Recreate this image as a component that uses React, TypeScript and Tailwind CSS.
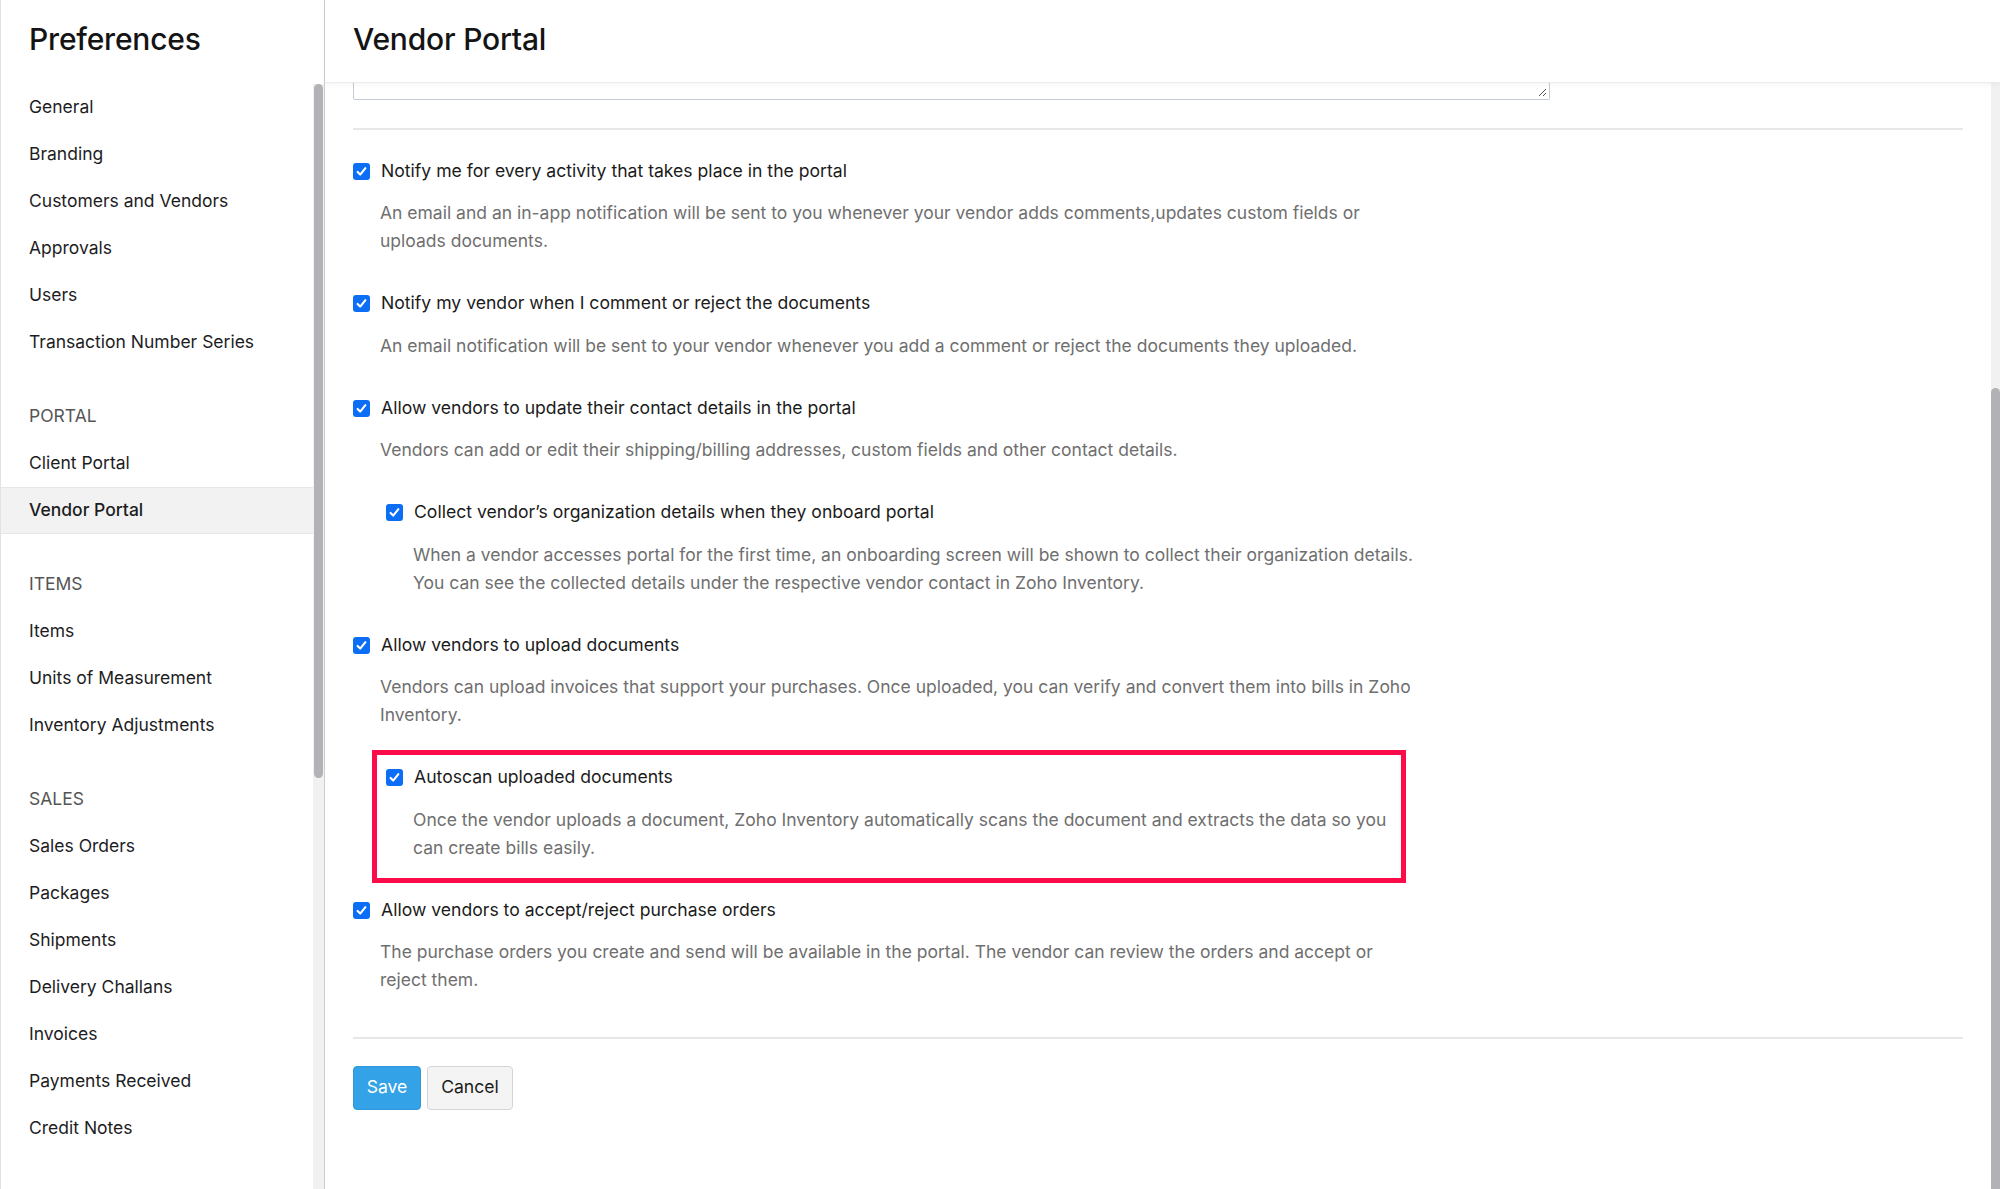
import React from 'react';

const groups = [
  { title: '', items: ['General', 'Branding', 'Customers and Vendors', 'Approvals', 'Users', 'Transaction Number Series'] },
  { title: 'PORTAL', items: ['Client Portal', 'Vendor Portal'] },
  { title: 'ITEMS', items: ['Items', 'Units of Measurement', 'Inventory Adjustments'] },
  {
    title: 'SALES',
    items: ['Sales Orders', 'Packages', 'Shipments', 'Delivery Challans', 'Invoices', 'Payments Received', 'Credit Notes'],
  },
];

const settings = [
  {
    label: 'Notify me for every activity that takes place in the portal',
    lines: [
      'An email and an in-app notification will be sent to you whenever your vendor adds comments,updates custom fields or',
      'uploads documents.',
    ],
  },
  {
    label: 'Notify my vendor when I comment or reject the documents',
    lines: ['An email notification will be sent to your vendor whenever you add a comment or reject the documents they uploaded.'],
  },
  {
    label: 'Allow vendors to update their contact details in the portal',
    lines: ['Vendors can add or edit their shipping/billing addresses, custom fields and other contact details.'],
  },
  {
    label: 'Collect vendor’s organization details when they onboard portal',
    sub: true,
    lines: [
      'When a vendor accesses portal for the first time, an onboarding screen will be shown to collect their organization details.',
      'You can see the collected details under the respective vendor contact in Zoho Inventory.',
    ],
  },
  {
    label: 'Allow vendors to upload documents',
    lines: [
      'Vendors can upload invoices that support your purchases. Once uploaded, you can verify and convert them into bills in Zoho',
      'Inventory.',
    ],
  },
  {
    label: 'Autoscan uploaded documents',
    sub: true,
    marked: true,
    lines: [
      'Once the vendor uploads a document, Zoho Inventory automatically scans the document and extracts the data so you',
      'can create bills easily.',
    ],
  },
  {
    label: 'Allow vendors to accept/reject purchase orders',
    lines: [
      'The purchase orders you create and send will be available in the portal. The vendor can review the orders and accept or',
      'reject them.',
    ],
  },
];

function Checkbox() {
  return (
    <span className="w-[17px] h-[17px] shrink-0 rounded-[3px] bg-[#0b6ef5] flex items-center justify-center">
      <svg width="13" height="13" viewBox="0 0 13 13" fill="none">
        <path d="M2.6 6.9 5.2 9.6 10.4 3.2" stroke="white" strokeWidth="2.1" strokeLinecap="round" strokeLinejoin="round" />
      </svg>
    </span>
  );
}

export default function App() {
  return (
    <div className="flex w-[2000px] h-[1189px] overflow-hidden bg-white text-[#1d1d1f] font-['Inter','Liberation_Sans',sans-serif]">
      {/* Sidebar */}
      <aside className="w-[325px] shrink-0 flex flex-col border-l border-l-[#e2e2e2] border-r border-r-[#cdcdcd]">
        <div className="h-[84px] shrink-0 flex items-center pl-[28px] pb-[5px]">
          <h1 className="text-[30px] font-medium tracking-[-0.2px] text-[#141414]">Preferences</h1>
        </div>
        <div className="flex flex-1 min-h-0">
          <nav className="flex-1">
            {groups.map((g) => (
              <div key={g.title || 'main'} className={g.title ? 'mt-[27px]' : ''}>
                {g.title && (
                  <div className="h-[47px] flex items-center pl-[28px] text-[17.5px] text-[#555]">{g.title}</div>
                )}
                {g.items.map((item) => (
                  <div
                    key={item}
                    className={
                      item === 'Vendor Portal'
                        ? 'h-[47px] flex items-center pl-[28px] text-[17.5px] font-medium bg-[#f2f2f2] border-y border-[#e7e7e7]'
                        : 'h-[47px] flex items-center pl-[28px] text-[17.5px]'
                    }
                  >
                    {item}
                  </div>
                ))}
              </div>
            ))}
          </nav>
          <div className="w-[11px] bg-[#f1f1f1] flex flex-col">
            <div className="h-[694px] mx-[1px] rounded-full bg-[#b2b2b7]" />
          </div>
        </div>
      </aside>

      {/* Main */}
      <main className="flex-1 flex flex-col min-w-0">
        <header className="h-[83px] shrink-0 flex items-center pl-[28px] pb-[3px] border-b border-[#ececec] shadow-[0_2px_4px_rgba(0,0,0,0.04)] relative z-10">
          <h2 className="text-[30px] font-medium tracking-[-0.2px] text-[#141414]">Vendor Portal</h2>
        </header>
        <div className="flex flex-1 min-h-0">
          <section className="flex-1 px-[28px]">
            <div className="relative w-[1197px] h-[17px] border border-t-0 border-[#c4cad6] rounded-b-[2px]">
              <svg className="absolute right-[2px] bottom-[2px]" width="10" height="10" viewBox="0 0 10 10">
                <path d="M9 2 2 9M9 6 6 9" stroke="#555" strokeWidth="1" />
              </svg>
            </div>
            <div className="mt-[28px] h-[2px] bg-[#e7e7e7]" />

            <div className="pt-[27px] flex flex-col">
              {settings.map((s) => (
                <div key={s.label} className={s.sub ? 'relative ml-[33px] mb-[34.5px]' : 'relative mb-[34.5px]'}>
                  {s.marked && (
                    <div className="absolute left-[-14px] top-[-14px] w-[1034px] h-[133px] border-[5px] border-[#fc0d4a] pointer-events-none" />
                  )}
                  <label className="h-[28px] flex items-center gap-[11px] text-[17.6px] text-[#1b1b1b]">
                    <Checkbox />
                    <span>{s.label}</span>
                  </label>
                  <p className="mt-[14px] pl-[27px] text-[17.5px] leading-[28px] text-[#6f6f6f]">
                    {s.lines.map((l, i) => (
                      <span key={i} className="block">
                        {l}
                      </span>
                    ))}
                  </p>
                </div>
              ))}
            </div>

            <div className="mt-[8px] h-[2px] bg-[#e7e7e7]" />
            <div className="mt-[27px] flex gap-[6px]">
              <button className="h-[44px] w-[68px] rounded-[4px] bg-[#34a2e6] border border-[#2f97da] text-white text-[17.6px]">
                Save
              </button>
              <button className="h-[44px] w-[86px] rounded-[4px] bg-[#f4f4f4] border border-[#d5d5d5] text-[#1b1b1b] text-[17.6px]">
                Cancel
              </button>
            </div>
          </section>
          <div className="w-[9px] shrink-0 bg-[#f1f1f1] flex flex-col justify-end">
            <div className="h-[801px] rounded-t-full bg-[#b1b1b6]" />
          </div>
        </div>
      </main>
    </div>
  );
}
